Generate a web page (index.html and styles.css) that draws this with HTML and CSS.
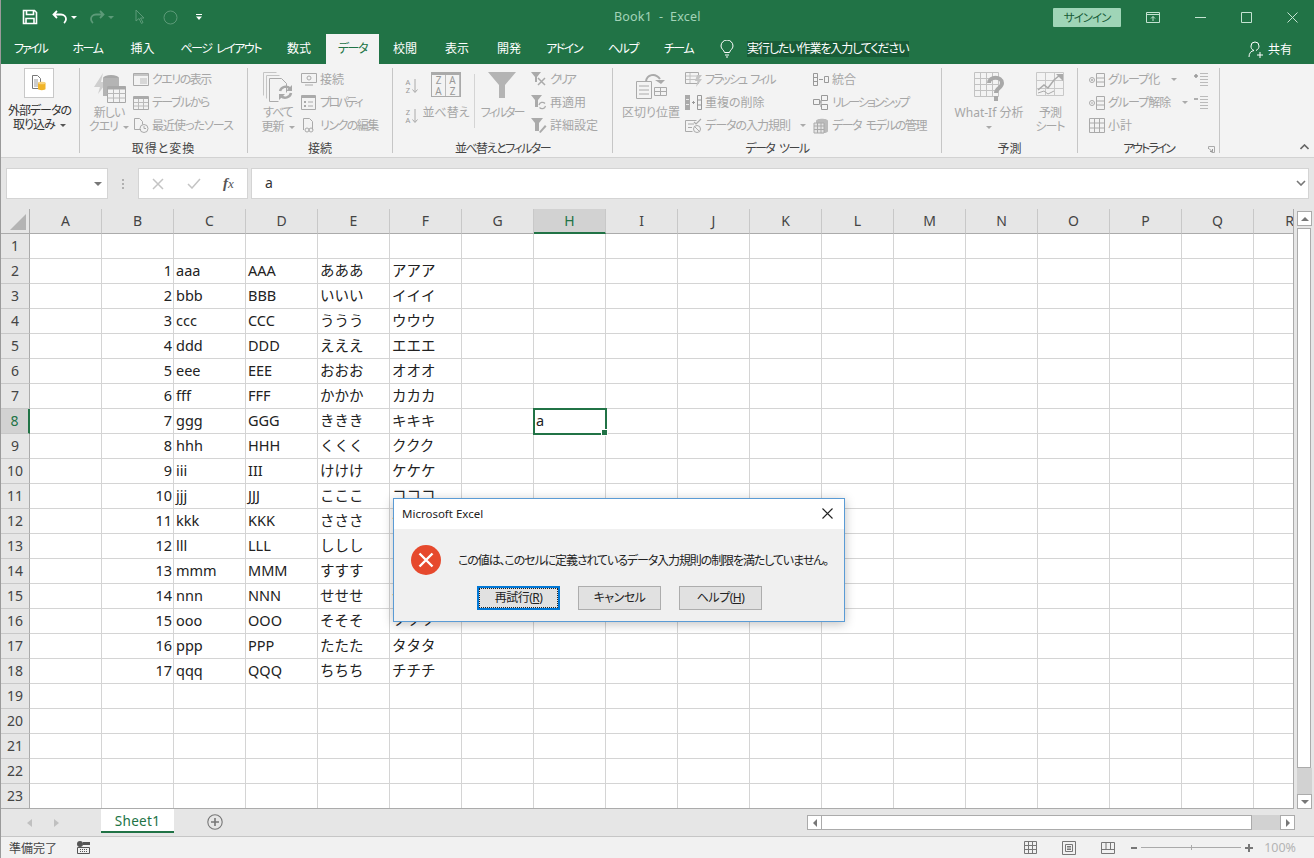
FILE: index.html
```html
<!DOCTYPE html>
<html lang="ja">
<head>
    <meta charset="UTF-8">
    <title>Book1 - Excel</title>
    <link rel="stylesheet" href="styles.css">
</head>
<body>
<div class="app">
    <!-- title bar -->
    <header class="titlebar">
        <div class="qat">
            <svg class="qat-save" width="16" height="16" viewBox="0 0 16 16"><path d="M1.5 1.5h11l2 2v11h-13z M4.5 1.5v4h7v-4 M4 14.5v-5h8v5" fill="none" stroke="#fff" stroke-width="1.6"/></svg>
            <svg class="qat-undo" width="16" height="14" viewBox="0 0 16 14"><path d="M5 1L1.5 4.500 5 8 M2 4.500h7c3 0 5 2 5 4.500s-1 3-2 4" fill="none" stroke="#fff" stroke-width="1.800"/></svg>
            <span class="qat-drop"></span>
            <svg class="qat-redo" width="16" height="14" viewBox="0 0 16 14"><path d="M11 1l3.500 3.500L11 8 M14 4.500H7C4 4.500 2 6.500 2 9s1 3 2 4" fill="none" stroke="#5c9a78" stroke-width="1.800"/></svg>
            <span class="qat-drop qat-drop-dim"></span>
            <svg class="qat-cursor" width="10" height="16" viewBox="0 0 10 16"><path d="M1 1v11l3-2.500 2.500 5 1.500-1-2.500-4.500H9z" fill="none" stroke="#5c9a78"/></svg>
            <svg class="qat-circle" width="15" height="15" viewBox="0 0 15 15"><circle cx="7.500" cy="7.500" r="6.500" fill="none" stroke="#5c9a78"/></svg>
            <svg class="qat-more" width="8" height="8" viewBox="0 0 8 8"><path d="M1 1h6v1H1z M1 3.500h6L4 7z" fill="#fff"/></svg>
        </div>
        <div class="doc-title">Book1&nbsp; -&nbsp; Excel</div>
        <div class="win-controls">
            <button class="signin">サインイン</button>
            <svg class="win-ic win-ribbon" width="14" height="11" viewBox="0 0 14 11"><path d="M.5.500h13v10H.5z M.5 2.500h13 M7 9V4.500 M5 6.500l2-2 2 2" fill="none" stroke="#c5e3d2"/></svg>
            <svg class="win-ic win-min" width="11" height="1" viewBox="0 0 11 1"><path d="M0 .500h11" stroke="#c5e3d2"/></svg>
            <svg class="win-ic win-max" width="11" height="11" viewBox="0 0 11 11"><path d="M.5.500h10v10H.5z" fill="none" stroke="#c5e3d2"/></svg>
            <svg class="win-ic win-close" width="11" height="11" viewBox="0 0 11 11"><path d="M.5.500l10 10 M10.500.500l-10 10" stroke="#c5e3d2"/></svg>
        </div>
    </header>

    <!-- ribbon tabs -->
    <nav class="tabs">
        <span class="tab tab-kana tab-file">ファイル</span>
        <span class="tab tab-kana tab-home">ホーム</span>
        <span class="tab">挿入</span>
        <span class="tab tab-kana">ページ レイアウト</span>
        <span class="tab tab-formula">数式</span>
        <span class="tab tab-kana tab-active">データ</span>
        <span class="tab tab-wide">校閲</span>
        <span class="tab tab-wide">表示</span>
        <span class="tab tab-wide">開発</span>
        <span class="tab tab-kana tab-addin">アドイン</span>
        <span class="tab tab-kana">ヘルプ</span>
        <span class="tab tab-kana">チーム</span>
        <svg class="bulb" width="14" height="18" viewBox="0 0 14 18"><path d="M4.500 12.500C4 10 1 9 1 6a6 6 0 0 1 12 0c0 3-3 4-3.500 6.500z M5 15h4 M6 17h2" fill="none" stroke="#fff"/></svg>
        <span class="tell-me">実行したい作業を入力してください</span>
        <span class="share">
            <svg width="16" height="17" viewBox="0 0 16 17"><path d="M1 16c0-4 2-6 5-6.500C3.500 8.500 3 7 3 5a4 4 0 0 1 8 0c0 2-1 3.500-3 4.500 M9 14h6 M12 11v6" fill="none" stroke="#fff"/></svg>
            共有
        </span>
    </nav>

    <!-- ribbon -->
    <div class="ribbon">
        <section class="group g-external">
            <div class="group-body">
                <div class="big big-external">
                    <div class="external-box">
                        <svg width="14" height="16" viewBox="0 0 14 16"><path d="M.5.500h5l3 3v10H.5z" fill="#fff" stroke="#777"/><path d="M2 5h4M2 7h4M2 9h4M2 11h4" stroke="#999"/><path d="M6 8c0-1.500 7.500-1.500 7.500 0v6c0 1.500-7.500 1.500-7.500 0z" fill="#f0b429"/><ellipse cx="9.750" cy="8" rx="3.750" ry="1.300" fill="#f8d27a"/></svg>
                    </div>
                    <span class="big-label big-label-on ls-1">外部データの<br>取り込み <i class="caret"></i></span>
                </div>
            </div>
        </section>

        <section class="group g-transform">
            <div class="group-body">
                <div class="big big-query">
                    <div class="big-icon">
                        <svg width="33" height="32" viewBox="0 0 33 32"><path d="M10 1L1 15h6l-2 7 9-12H8z" fill="#cfcfcf"/><ellipse cx="18" cy="6" rx="8" ry="3" fill="#a8a8a8"/><path d="M10 6v18h16V6z" fill="#b4b4b4"/><path d="M14.500 14.500h18v16h-18z" fill="#f3f3f3" stroke="#a8a8a8"/><path d="M14.500 14.500h18v3h-18z" fill="#a8a8a8"/><path d="M14.500 21.500h18M14.500 26h18M20.500 17v13M26.500 17v13" stroke="#b8b8b8" fill="none"/></svg>
                    </div>
                    <span class="big-label ls-1">新しい<br>クエリ <i class="caret caret-dim"></i></span>
                </div>
                <div class="list">
                    <div class="item"><svg width="16" height="13" viewBox="0 0 16 13"><path d="M.5.500h15v12H.5z" fill="none" stroke="#aaa"/><path d="M1 1h14v2H1z" fill="#c4c4c4"/><path d="M7 6h7M7 8h7M7 10h7" stroke="#bbb"/></svg><span class="ls-15">クエリの表示</span></div>
                    <div class="item"><svg width="16" height="14" viewBox="0 0 16 14"><path d="M.5.500h15v13H.5z" fill="none" stroke="#aaa"/><path d="M1 1h14v2H1z" fill="#aaa"/><path d="M1 6.500h14M1 10h14M5.500 3v10M10.500 3v10" stroke="#bbb"/></svg><span class="ls-15">テーブルから</span></div>
                    <div class="item"><svg width="16" height="15" viewBox="0 0 16 15"><path d="M8 11.500H1.500V.500h5l3 3v3" fill="none" stroke="#aaa"/><circle cx="11" cy="10.500" r="4" fill="none" stroke="#aaa"/><path d="M11 8v2.500h2" fill="none" stroke="#aaa"/></svg><span class="ls-1">最近使ったソース</span></div>
                </div>
            </div>
            <div class="group-label ls-plus">取得と変換</div>
        </section>

        <section class="group g-connect">
            <div class="group-body">
                <div class="big big-refresh">
                    <div class="big-icon">
                        <svg width="30" height="30" viewBox="0 0 30 30"><path d="M.5.500h13M.5.500v23M3.500 3.500h13M3.500 3.500v23" fill="none" stroke="#c4c4c4"/><path d="M6.500 6.500h12l5 5v9M6.500 6.500v23h9" fill="none" stroke="#aaa"/><path d="M17 19a6 6 0 0 1 10-2.500 M28 21a6 6 0 0 1-10 3" fill="none" stroke="#a8a8a8" stroke-width="2.500"/><path d="M29 13v6h-6zM16 28v-6h6z" fill="#a8a8a8"/></svg>
                    </div>
                    <span class="big-label ls-1">すべて<br>更新 <i class="caret caret-dim"></i></span>
                </div>
                <div class="list">
                    <div class="item"><svg width="16" height="13" viewBox="0 0 16 13"><path d="M.5.500h15v9H.5z" fill="none" stroke="#aaa"/><circle cx="8" cy="5" r="2" fill="none" stroke="#aaa"/><path d="M4 12h8" stroke="#aaa"/></svg>接続</div>
                    <div class="item"><svg width="16" height="15" viewBox="0 0 16 15"><path d="M.5.500h14v14H.5z" fill="none" stroke="#aaa"/><path d="M1 1h13v2H1z" fill="#aaa"/><path d="M3 6h2v2H3zM3 10h2v2H3z" fill="#aaa"/><path d="M7 7h5M7 11h5" stroke="#aaa"/></svg><span class="ls-25">プロパティ</span></div>
                    <div class="item"><svg width="16" height="15" viewBox="0 0 16 15"><path d="M2.500 12V.500h6l3 3v8" fill="none" stroke="#aaa"/><circle cx="6" cy="12" r="2" fill="none" stroke="#aaa"/><circle cx="10" cy="12" r="2" fill="none" stroke="#aaa"/></svg><span class="ls-15">リンクの編集</span></div>
                </div>
            </div>
            <div class="group-label">接続</div>
        </section>

        <section class="group g-sort">
            <div class="group-body">
                <div class="sort-col">
                    <svg width="15" height="16" viewBox="0 0 15 16"><path d="M11 1v13M8.500 11.500L11 14.500l2.500-3" fill="none" stroke="#aaa"/></svg>
                    <svg width="15" height="16" viewBox="0 0 15 16"><path d="M11 1v13M8.500 11.500L11 14.500l2.500-3" fill="none" stroke="#aaa"/></svg>
                    <span class="az az-1">A<br>Z</span>
                    <span class="az az-2">Z<br>A</span>
                </div>
                <div class="big big-sort">
                    <div class="big-icon">
                        <div class="sort-grid"><span>Z</span><span>A</span><span>A</span><span>Z</span></div>
                    </div>
                    <span class="big-label">並べ替え</span>
                </div>
                <div class="vsep"></div>
                <div class="big big-filter">
                    <div class="big-icon">
                        <svg width="28" height="26" viewBox="0 0 28 26"><path d="M0 0h28L17 13v13h-6V13z" fill="#b4b4b4"/></svg>
                    </div>
                    <span class="big-label ls-2">フィルター</span>
                </div>
                <div class="list">
                    <div class="item"><svg width="16" height="15" viewBox="0 0 16 15"><path d="M0 0h10L6 5v5H4V5z" fill="#aaa"/><path d="M7 6l7 7M14 6l-7 7" stroke="#aaa" stroke-width="1.500"/></svg><span class="ls-25">クリア</span></div>
                    <div class="item"><svg width="16" height="15" viewBox="0 0 16 15"><path d="M0 0h11L7 5v7H4V5z" fill="#aaa"/><path d="M8 10a3.500 3.500 0 0 1 6-1.500 M14.500 11a3.500 3.500 0 0 1-6 1.500" fill="none" stroke="#aaa" stroke-width="1.200"/></svg>再適用</div>
                    <div class="item"><svg width="16" height="15" viewBox="0 0 16 15"><path d="M0 0h12L8 5v8H4V5z" fill="#aaa"/><path d="M8 14l6-7 1.500 1.500-6 6.500z" fill="#aaa"/></svg>詳細設定</div>
                </div>
            </div>
            <div class="group-label ls-15">並べ替えとフィルター</div>
        </section>

        <section class="group g-tools">
            <div class="group-body">
                <div class="big big-split">
                    <div class="big-icon">
                        <svg width="31" height="27" viewBox="0 0 31 27"><path d="M.5 9.500h15v17H.5z" fill="none" stroke="#aaa"/><path d="M3 14h10M3 18h10M3 22h10" stroke="#aaa"/><path d="M18.500 15.500h12v8h-12zM18.500 19.500h12M24.500 15.500v8" fill="none" stroke="#aaa"/><path d="M10 9C11 3 19 0 24 7" fill="none" stroke="#aaa" stroke-width="2"/><path d="M19 8h10l-4 4z" fill="#aaa"/></svg>
                    </div>
                    <span class="big-label">区切り位置</span>
                </div>
                <div class="list list-tools">
                    <div class="item"><svg width="17" height="15" viewBox="0 0 17 15"><path d="M.5.500h13v11H.5z" fill="none" stroke="#aaa"/><path d="M1 4h12M1 7.500h12M5 1v10" stroke="#c0c0c0"/><path d="M12 3h5l-3 4h3l-6 8 1.500-6H10z" fill="#c4c4c4"/></svg><span class="ls-2">フラッシュ フィル</span></div>
                    <div class="item"><svg width="17" height="15" viewBox="0 0 17 15"><path d="M0 0h5v15H0z" fill="#aaa"/><path d="M1 4.500h3M1 9.500h3" stroke="#e8e8e8"/><path d="M12.500.500h4v14h-4zM12.500 5h4M12.500 10h4" fill="none" stroke="#999"/><path d="M7 7.500h3M8.500 6v3" stroke="#999"/></svg>重複の削除</div>
                    <div class="item"><svg width="17" height="15" viewBox="0 0 17 15"><path d="M.5 2.500h11M.5 2.500v11h7M3 6h6M3 9.500h4" fill="none" stroke="#aaa"/><path d="M9 4l2 2 5-5" fill="none" stroke="#aaa" stroke-width="1.200"/><circle cx="12" cy="11" r="3.500" fill="none" stroke="#aaa"/><path d="M9.500 8.500l5 5" stroke="#aaa"/></svg><span class="ls-1">データの入力規則</span><i class="caret caret-dim caret-gap"></i></div>
                </div>
                <div class="list">
                    <div class="item"><svg width="16" height="13" viewBox="0 0 16 13"><path d="M.5.500h4v12h-4zM.5 4.500h4M.5 8.500h4M11.500 3.500h4v6h-4z" fill="none" stroke="#999"/><path d="M6 6.500h4" stroke="#999"/></svg>統合</div>
                    <div class="item"><svg width="16" height="15" viewBox="0 0 16 15"><path d="M.5 4.500h6v5h-6zM8.500.500h6v5h-6zM8.500 9.500h6v5h-6zM6.500 7h2M8 5v7" fill="none" stroke="#999"/></svg><span class="ls-2">リレーションシップ</span></div>
                    <div class="item"><svg width="16" height="16" viewBox="0 0 16 16"><path d="M3 3c0-3 12-3 12 0v10c0 3-12 3-12 0z" fill="#bbb"/><path d="M1 5h10v10H1z" fill="#e4e4e4" stroke="#aaa"/><path d="M1 8h10M1 11.500h10M4.500 5v10M8 5v10" stroke="#aaa"/></svg><span class="ls-15">データ モデルの管理</span></div>
                </div>
            </div>
            <div class="group-label ls-15">データ ツール</div>
        </section>

        <section class="group g-forecast">
            <div class="group-body">
                <div class="big big-whatif">
                    <div class="big-icon">
                        <svg width="30" height="30" viewBox="0 0 30 30"><path d="M.5.500h24v24H.5zM.5 6.500h24M.5 12.500h24M.5 18.500h24M6.500.500v24M12.500.500v24M18.500.500v24" fill="none" stroke="#c2c2c2"/><path d="M15 11c0-7 13-7 13 0 0 5-6 5-6 10" fill="none" stroke="#a8a8a8" stroke-width="4"/><path d="M20 24h4v5h-4z" fill="#a8a8a8"/></svg>
                    </div>
                    <span class="big-label">What-If 分析<br><i class="caret caret-dim"></i></span>
                </div>
                <div class="big big-sheet">
                    <div class="big-icon">
                        <svg width="28" height="26" viewBox="0 0 28 26"><path d="M.5.500h27v23H.5zM.5 8.500h27M.5 16.500h27M9.500.500v23M18.500.500v23" fill="none" stroke="#c8c8c8"/><path d="M2 18l6-5 4 3 6-8 6-5" fill="none" stroke="#aaa" stroke-width="1.500"/><path d="M20 2h7v7z" fill="#aaa"/><path d="M2 21l6-2 4 3 6-3" fill="none" stroke="#aaa"/></svg>
                    </div>
                    <span class="big-label ls-1">予測<br>シート</span>
                </div>
            </div>
            <div class="group-label">予測</div>
        </section>

        <section class="group g-outline">
            <div class="group-body">
                <div class="list list-outline">
                    <div class="item"><svg width="16" height="14" viewBox="0 0 16 14"><path d="M7.500.500h8v13h-8zM7.500 5h8M7.500 9h8" fill="none" stroke="#aaa"/><circle cx="3" cy="7" r="2.500" fill="none" stroke="#aaa"/><path d="M2 7h2M3 6v2" stroke="#aaa"/></svg><span class="ls-1">グループ化</span><i class="caret caret-dim caret-gap2"></i></div>
                    <div class="item"><svg width="16" height="14" viewBox="0 0 16 14"><path d="M7.500.500h8v13h-8zM7.500 5h8M7.500 9h8" fill="none" stroke="#aaa"/><circle cx="3" cy="7" r="2.500" fill="none" stroke="#aaa"/><path d="M2 7h2" stroke="#aaa"/></svg><span class="ls-1">グループ解除</span><i class="caret caret-dim caret-gap2"></i></div>
                    <div class="item"><svg width="16" height="15" viewBox="0 0 16 15"><path d="M.5.500h15v14H.5zM5.500.500v14M10.500.500v14M.5 5h15M.5 10h15" fill="none" stroke="#aaa"/></svg>小計</div>
                </div>
                <div class="outline-side">
                    <svg width="14" height="14" viewBox="0 0 14 14"><path d="M0 3h4M2 1v4" stroke="#999" stroke-width="1.500"/><path d="M6 .500h8M6 3.500h8M6 6.500h8M6 9.500h8M6 12.500h8" stroke="#bbb"/></svg>
                    <svg width="14" height="14" viewBox="0 0 14 14"><path d="M0 3h4" stroke="#999" stroke-width="1.500"/><path d="M6 .500h8M6 3.500h8M6 6.500h8M6 9.500h8M6 12.500h8" stroke="#bbb"/></svg>
                </div>
            </div>
            <div class="group-label ls-2">アウトライン</div>
            <svg class="launcher" width="7" height="7" viewBox="0 0 7 7"><path d="M.5 3V.500H6.500V6.500H3.500" fill="none" stroke="#aaa"/><path d="M1 2.500l3 3M4.500 3v2.500H2" fill="none" stroke="#999"/></svg>
        </section>

        <svg class="collapse" width="9" height="6" viewBox="0 0 9 6"><path d="M.5 5L4.500 1l4 4" fill="none" stroke="#666" stroke-width="1.600"/></svg>
    </div>

    <!-- formula bar -->
    <div class="formula">
        <div class="namebox"><i class="caret caret-name"></i></div>
        <div class="grip"><i></i><i></i><i></i></div>
        <div class="fx-box">
            <svg width="12" height="12" viewBox="0 0 12 12"><path d="M1 1l10 10M11 1L1 11" stroke="#c4c4c4" stroke-width="1.500"/></svg>
            <svg width="14" height="11" viewBox="0 0 14 11"><path d="M1 6l4 4 8-9" fill="none" stroke="#c4c4c4" stroke-width="1.500"/></svg>
            <span class="fx"><b>f</b>x</span>
        </div>
        <div class="formula-input">a
            <svg width="10" height="6" viewBox="0 0 10 6"><path d="M1 1l4 4 4-4" fill="none" stroke="#777" stroke-width="1.600"/></svg>
        </div>
    </div>

    <!-- sheet + vertical scrollbar -->
    <div class="workspace">
        <div class="sheet" id="sheet"></div>
        <div class="vscroll">
            <div class="sb-btn"><i class="arrow-up"></i></div>
            <div class="vthumb"></div>
            <div class="vtrack"></div>
            <div class="sb-btn"><i class="arrow-down"></i></div>
        </div>
    </div>

    <!-- sheet tabs -->
    <div class="sheetbar">
        <div class="sheet-nav"><i class="nav-left"></i><i class="nav-right"></i></div>
        <div class="sheet-tab">Sheet1</div>
        <svg class="add-sheet" width="16" height="16" viewBox="0 0 16 16"><circle cx="8" cy="8" r="7.200" fill="none" stroke="#777" stroke-width="1.100"/><path d="M8 4v8M4 8h8" stroke="#777" stroke-width="1.600"/></svg>
        <div class="hscroll">
            <div class="sb-btn"><i class="arrow-left"></i></div>
            <div class="hthumb"></div>
            <div class="htrack"></div>
            <div class="sb-btn"><i class="arrow-right"></i></div>
        </div>
    </div>

    <!-- status bar -->
    <footer class="statusbar">
        <span class="status-text">準備完了</span>
        <svg class="macro" width="13" height="13" viewBox="0 0 13 13"><circle cx="3" cy="3" r="3" fill="#555"/><path d="M.5 6.500h12v6H.5z" fill="none" stroke="#555"/><path d="M6 1h7v3H6z" fill="#555"/><path d="M3 8.500h8M3 10.500h8" stroke="#555" stroke-dasharray="1 1"/></svg>
        <div class="views">
            <svg width="13" height="13" viewBox="0 0 13 13"><path d="M.5.500h12v12H.5zM.5 4.500h12M.5 8.500h12M4.500.500v12M8.500.500v12" fill="none" stroke="#777"/></svg>
            <svg width="14" height="14" viewBox="0 0 14 14"><path d="M.5.500h13v13H.5z" fill="none" stroke="#777"/><path d="M3.500 3.500h7v7h-7zM5 5.500h4M5 7h4M5 8.500h4" fill="none" stroke="#777"/></svg>
            <svg width="14" height="12" viewBox="0 0 14 12"><path d="M.5.500h13v11H.5zM.5 7.500h13M5 .500v7M9.500.500v7" fill="none" stroke="#777"/></svg>
        </div>
        <div class="zoom">
            <span class="zoom-minus"></span>
            <span class="zoom-track"><i></i></span>
            <span class="zoom-plus"></span>
            <span class="zoom-value">100%</span>
        </div>
    </footer>

    <!-- validation dialog -->
    <div class="dialog">
        <div class="dialog-title">
            Microsoft Excel
            <svg width="11" height="11" viewBox="0 0 11 11"><path d="M.5.500l10 10M10.500.500l-10 10" stroke="#222" stroke-width="1.100"/></svg>
        </div>
        <div class="dialog-body">
            <div class="dialog-msg">
                <svg width="30" height="30" viewBox="0 0 30 30"><circle cx="15" cy="15" r="15" fill="#e6492d"/><path d="M8.500 8.500l13 13M21.500 8.500l-13 13" stroke="#fff" stroke-width="2.400"/></svg>
                <p>この値は、このセルに定義されているデータ入力規則の制限を満たしていません。</p>
            </div>
            <div class="dialog-btns">
                <button class="btn btn-default"><span>再試行(<u>R</u>)</span></button>
                <button class="btn"><span>キャンセル</span></button>
                <button class="btn"><span>ヘルプ(<u>H</u>)</span></button>
            </div>
        </div>
    </div>
</div>
<script src="grid.js"></script>
</body>
</html>
```

FILE: styles.css
```css
* {
    box-sizing: border-box;
}
html, body {
    margin: 0;
    height: 100%;
    overflow: hidden;
}
body {
    font-family: "Noto Sans", "Noto Sans CJK JP", sans-serif;
    font-size: 12px;
    font-feature-settings: "palt";
    color: #333;
}
.app {
    position: relative;
    width: 1314px;
    height: 858px;
    border-left: 1px solid #9a9a9a;
    background: #e6e6e6;
    display: flex;
    flex-direction: column;
}

/* narrow kana text */
.ls-plus { letter-spacing: 1px; }
.ls-1 { letter-spacing: -1px; word-spacing: 3px; }
.ls-15 { letter-spacing: -1.500px; word-spacing: 3px; }
.ls-2 { letter-spacing: -2px; word-spacing: 3px; }
.ls-25 { letter-spacing: -2.500px; }

/* title bar */
.titlebar {
    height: 34px;
    background: #217346;
    display: flex;
    align-items: center;
    position: relative;
}
.qat {
    display: flex;
    align-items: center;
    padding-left: 21px;
}
.qat-undo { margin-left: 14px; }
.qat-drop {
    width: 0;
    height: 0;
    margin-left: 3px;
    border: 3px solid transparent;
    border-top-color: #fff;
    border-bottom: 0;
}
.qat-drop-dim { border-top-color: #5c9a78; }
.qat-redo { margin-left: 12px; }
.qat-cursor { margin-left: 21px; }
.qat-circle { margin-left: 18px; }
.qat-more { margin-left: 17px; }
.doc-title {
    position: absolute;
    left: 613px;
    top: 8px;
    font-size: 12.500px;
    color: #a3d3b8;
    letter-spacing: .2px;
}
.win-controls {
    margin-left: auto;
    display: flex;
    align-items: center;
    padding-right: 16px;
}
.signin {
    width: 68px;
    height: 19px;
    padding: 0;
    border: 0;
    border-radius: 1px;
    background: #9fd5b7;
    color: #185c37;
    font: inherit;
    font-size: 11.500px;
    line-height: 19px;
    letter-spacing: -1px;
}
.win-ribbon { margin-left: 25px; }
.win-min { margin-left: 35px; }
.win-max { margin-left: 35px; }
.win-close { margin-left: 35px; }

/* tabs */
.tabs {
    height: 30px;
    background: #217346;
    display: flex;
    align-items: center;
    color: #fff;
}
.tab {
    height: 30px;
    line-height: 30px;
    padding: 0 13px;
    white-space: nowrap;
}
.tab-kana {
    letter-spacing: -1.500px;
    word-spacing: 3px;
}
.tab-file { letter-spacing: -2.250px; }
.tab-home { padding-right: 15px; }
.tab-formula { padding-right: 15px; }
.tab-wide { padding: 0 14px; }
.tab-addin { padding-left: 11px; }
.tab-active {
    padding: 0 12px;
    background: #f3f3f3;
    color: #217346;
}
.bulb { margin-left: 14px; }
.tell-me {
    margin-left: 13px;
    width: 162px;
    height: 16px;
    line-height: 16px;
    background: #185c37;
    white-space: nowrap;
    letter-spacing: -1.100px;
}
.share {
    margin-left: auto;
    padding-right: 22px;
    display: flex;
    align-items: center;
    gap: 4px;
}

/* ribbon */
.ribbon {
    height: 94px;
    background: #f3f3f3;
    border-bottom: 1px solid #d2d2d2;
    padding-top: 4px;
    padding-bottom: 4px;
    display: flex;
    color: #a6a6a6;
    line-height: 14px;
}
.group {
    position: relative;
    height: 85px;
    border-right: 1px solid #c6c6c6;
    display: flex;
    flex-direction: column;
    flex: none;
}
.group-body {
    display: flex;
    height: 74px;
    flex: none;
}
.group-label {
    height: 14px;
    line-height: 14px;
    flex: none;
    text-align: center;
    color: #444;
    white-space: nowrap;
}
.g-external { width: 79px; }
.g-transform { width: 168px; }
.g-connect { width: 145px; }
.g-sort { width: 220px; }
.g-tools { width: 329px; }
.g-forecast { width: 136px; }
.g-outline { width: 142px; }
.g-transform .group-body { padding-left: 9px; }
.g-connect .group-body { padding-left: 10px; }
.g-sort .group-body { padding-left: 11px; }
.g-tools .group-body { padding-left: 10px; }
.g-forecast .group-body { padding-left: 10px; }
.g-outline .group-body { padding-left: 11px; }
.big {
    display: flex;
    flex-direction: column;
    align-items: center;
    flex: none;
    text-align: center;
}
.big-icon {
    height: 38px;
    padding-top: 4px;
}
.big-label {
    white-space: nowrap;
}
.big-label-on {
    color: #333;
}
.big-external {
    width: 77px;
}
.external-box {
    width: 30px;
    height: 30px;
    margin-bottom: 6px;
    margin-right: 2px;
    background: #fff;
    border: 1px solid #c8c8c8;
    display: flex;
    align-items: center;
    justify-content: center;
}
.big-query { width: 40px; margin-right: 4px; }
.big-refresh { width: 40px; margin-right: 3px; }
.sort-col {
    position: relative;
    width: 16px;
    margin-right: 4px;
    padding-top: 10px;
    display: flex;
    flex-direction: column;
    gap: 14px;
}
.az {
    position: absolute;
    left: 0;
    width: 8px;
    font-size: 7.500px;
    line-height: 8px;
    text-align: center;
    color: #999;
}
.az-1 { top: 10px; }
.az-2 { top: 40px; }
.big-sort { width: 44px; }
.sort-grid {
    width: 30px;
    height: 25px;
    border: 1px solid #aaa;
    border-top: 3px solid #aaa;
    display: grid;
    grid-template-columns: 1fr 1fr;
    font-size: 10px;
    line-height: 10px;
    text-align: center;
    color: #999;
}
.sort-grid span {
    border-right: 1px solid #bbb;
}
.vsep {
    width: 1px;
    height: 54px;
    margin: 6px 6px 0 6px;
    background: #d4d4d4;
}
.big-filter { width: 42px; margin-right: 8px; }
.big-split { width: 56px; margin-right: 6px; }
.big-whatif { width: 74px; margin-right: 4px; }
.big-sheet { width: 40px; }
.list {
    display: flex;
    flex-direction: column;
    flex: none;
}
.list-tools { width: 128px; }
.list-outline { width: 105px; }
.item {
    height: 23px;
    display: flex;
    align-items: center;
    gap: 3px;
    white-space: nowrap;
}
.outline-side {
    padding-top: 5px;
    display: flex;
    flex-direction: column;
    gap: 9px;
}
.launcher {
    position: absolute;
    right: 4px;
    bottom: 0;
}
.collapse {
    margin: 76px 0 0 80px;
}
.caret {
    display: inline-block;
    width: 0;
    height: 0;
    border: 3px solid transparent;
    border-top-color: #555;
    border-bottom: 0;
    vertical-align: middle;
}
.caret-dim { border-top-color: #aaa; }
.caret-gap { margin-left: 7px; }
.caret-gap2 { margin-left: 9px; }

/* formula bar */
.formula {
    height: 51px;
    padding: 10px 5px;
    display: flex;
    align-items: stretch;
}
.namebox {
    width: 102px;
    background: #fff;
    border: 1px solid #d4d4d4;
    display: flex;
    align-items: center;
    justify-content: flex-end;
    padding-right: 5px;
}
.caret-name {
    border-width: 4px;
    border-bottom: 0;
    border-top-color: #777;
}
.grip {
    width: 30px;
    display: flex;
    flex-direction: column;
    align-items: center;
    justify-content: center;
    gap: 2px;
}
.grip i {
    width: 2px;
    height: 2px;
    background: #b0b0b0;
}
.fx-box {
    width: 110px;
    background: #fff;
    border: 1px solid #d4d4d4;
    display: flex;
    align-items: center;
    padding-left: 13px;
    gap: 23px;
}
.fx {
    font-family: "Liberation Serif", serif;
    font-style: italic;
    font-size: 13px;
    color: #555;
    margin-left: -1px;
}
.fx b { font-size: 15px; }
.formula-input {
    flex: 1;
    margin-left: 3px;
    background: #fff;
    border: 1px solid #d4d4d4;
    padding-left: 13px;
    padding-right: 2px;
    padding-bottom: 2px;
    font-size: 14px;
    line-height: 26px;
    display: flex;
    align-items: center;
    justify-content: space-between;
}

/* sheet */
.workspace {
    display: flex;
    height: 600px;
}
.sheet {
    width: 1293px;
    height: 600px;
    overflow: hidden;
    flex: none;
    display: grid;
    grid-template-columns: 29px repeat(18, 72px);
    grid-auto-rows: 25px;
    background: #fff;
    border-right: 1px solid #ababab;
    border-bottom: 1px solid #ababab;
    font-size: 14.500px;
    line-height: 22px;
    color: #222;
    font-feature-settings: normal;
}
.cell {
    border-right: 1px solid #d4d4d4;
    border-bottom: 1px solid #d4d4d4;
    padding: 0 2px;
    white-space: nowrap;
    position: relative;
}
.cell-num { text-align: right; padding-right: 1px; }
.corner, .col-head, .row-head {
    background: #e6e6e6;
    text-align: center;
    color: #444;
    font-size: 14px;
    line-height: 24px;
}
.corner {
    position: relative;
    border-right: 1px solid #ababab;
    border-bottom: 1px solid #ababab;
}
.corner::after {
    content: "";
    position: absolute;
    right: 3px;
    bottom: 3px;
    width: 0;
    height: 0;
    border-left: 16px solid transparent;
    border-bottom: 16px solid #b4b4b4;
}
.col-head {
    border-right: 1px solid #c8c8c8;
    border-bottom: 1px solid #ababab;
}
.row-head {
    border-right: 1px solid #ababab;
    border-bottom: 1px solid #c8c8c8;
}
.head-on {
    background: #d2d2d2;
    color: #217346;
}
.col-head.head-on { border-bottom: 2px solid #217346; line-height: 23px; }
.row-head.head-on { border-right: 2px solid #217346; }
.cell-active::after {
    content: "";
    position: absolute;
    left: -1px;
    top: -1px;
    right: -2px;
    bottom: -2px;
    border: 2px solid #217346;
    z-index: 1;
}
.cell-active::before {
    content: "";
    position: absolute;
    right: -3px;
    bottom: -3px;
    width: 5px;
    height: 5px;
    background: #217346;
    border: 1px solid #fff;
    z-index: 2;
}

/* scrollbars */
.vscroll {
    width: 20px;
    padding: 2px 3px 0 3px;
    display: flex;
    flex-direction: column;
}
.sb-btn {
    width: 15px;
    height: 15px;
    flex: none;
    background: #fff;
    border: 1px solid #ababab;
    display: flex;
    align-items: center;
    justify-content: center;
}
.vthumb {
    height: 540px;
    margin-top: 2px;
    background: #fff;
    border: 1px solid #ababab;
    flex: none;
}
.vtrack {
    width: 15px;
    height: 26px;
    flex: none;
    background: #d2d2d2;
}
.arrow-up, .arrow-down, .arrow-left, .arrow-right {
    width: 0;
    height: 0;
    border: 4px solid transparent;
}
.arrow-up { border-bottom-color: #777; border-top: 0; }
.arrow-down { border-top-color: #777; border-bottom: 0; }
.arrow-left { border-right-color: #777; border-left: 0; }
.arrow-right { border-left-color: #777; border-right: 0; }

/* sheet tabs */
.sheetbar {
    height: 28px;
    border-bottom: 1px solid #c6c6c6;
    display: flex;
    align-items: flex-start;
}
.sheet-nav {
    width: 100px;
    height: 27px;
    display: flex;
    align-items: center;
    padding-left: 26px;
    gap: 22px;
}
.nav-left, .nav-right {
    width: 0;
    height: 0;
    border: 4px solid transparent;
}
.nav-left { border-right: 5px solid #c0c0c0; border-left: 0; }
.nav-right { border-left: 5px solid #c0c0c0; border-right: 0; }
.sheet-tab {
    width: 73px;
    height: 24px;
    background: #fff;
    border-bottom: 2px solid #217346;
    color: #217346;
    text-align: center;
    font-size: 13.500px;
    line-height: 24px;
    letter-spacing: .3px;
}
.add-sheet { margin: 5px 0 0 33px; }
.hscroll {
    margin-left: auto;
    margin-right: 19px;
    margin-top: 6px;
    display: flex;
    height: 15px;
}
.hthumb {
    width: 431px;
    margin-left: -1px;
    background: #fff;
    border: 1px solid #ababab;
}
.htrack {
    width: 28px;
    background: #d2d2d2;
}

/* status bar */
.statusbar {
    flex: 1;
    background: #f1f1f1;
    display: flex;
    align-items: center;
}
.status-text {
    margin-left: 8px;
    color: #444;
}
.macro { margin-left: 20px; }
.views {
    margin-left: auto;
    display: flex;
    align-items: center;
    gap: 25px;
}
.zoom {
    display: flex;
    align-items: center;
    margin-left: 16px;
    margin-right: 18px;
}
.zoom-minus {
    width: 6px;
    height: 2px;
    background: #777;
}
.zoom-track {
    position: relative;
    width: 100px;
    height: 1px;
    margin: 0 4px;
    background: #aaa;
}
.zoom-track i {
    position: absolute;
    left: 50px;
    top: -2px;
    width: 1px;
    height: 5px;
    background: #aaa;
}
.zoom-plus {
    position: relative;
    width: 8px;
    height: 2px;
    background: #777;
}
.zoom-plus::after {
    content: "";
    position: absolute;
    left: 3px;
    top: -3px;
    width: 2px;
    height: 8px;
    background: #777;
}
.zoom-value {
    margin-left: 11px;
    font-size: 12.500px;
    color: #b4b4b4;
}

/* dialog */
.dialog {
    position: absolute;
    left: 392px;
    top: 498px;
    width: 452px;
    height: 124px;
    background: #fff;
    border: 1px solid #5a9bd5;
    box-shadow: 0 2px 10px rgba(0, 0, 0, .25);
    display: flex;
    flex-direction: column;
    z-index: 5;
}
.dialog-title {
    height: 30px;
    padding: 0 11px 2px 8px;
    display: flex;
    align-items: center;
    justify-content: space-between;
    color: #222;
    font-size: 11.500px;
}
.dialog-body {
    flex: 1;
    background: #f0f0f0;
    padding-left: 17px;
}
.dialog-msg {
    display: flex;
    align-items: center;
    height: 31px;
    margin-top: 15px;
}
.dialog-msg svg { flex: none; }
.dialog-msg p {
    margin: 0 0 0 17px;
    white-space: nowrap;
    color: #222;
    font-size: 12px;
    letter-spacing: -1.100px;
}
.dialog-btns {
    display: flex;
    margin: 11px 0 0 66px;
    gap: 18px;
}
.btn {
    width: 83px;
    height: 24px;
    padding: 0;
    background: #e1e1e1;
    border: 1px solid #adadad;
    font: inherit;
    font-size: 12px;
    color: #222;
    line-height: 20px;
    letter-spacing: -.5px;
}
.btn-default {
    border: 2px solid #0078d7;
}
.btn-default span {
    display: block;
    border: 1px dotted #222;
    line-height: 18px;
    height: 20px;
}
```

FILE: grid.js
```js
// 列見出しと行を組み立てる
var cols = 'ABCDEFGHIJKLMNOPQR'.split('');
var hira = 'あいうえおかきくけこさしすせそたち';
var kata = 'アイウエオカキクケコサシスセソタチ';
var abc = 'abcdefghijklmnopq';
var sheet = document.getElementById('sheet');

function add(cls, text) {
    var el = document.createElement('div');
    el.className = cls;
    if (text !== undefined) el.textContent = text;
    sheet.appendChild(el);
    return el;
}

function rep(ch) {
    return ch + ch + ch;
}

add('corner');
cols.forEach(function (c) {
    add('col-head' + (c === 'H' ? ' head-on' : ''), c);
});

for (var r = 1; r <= 23; r++) {
    add('row-head' + (r === 8 ? ' head-on' : ''), r);
    for (var c = 0; c < cols.length; c++) {
        var i = r - 2;
        var hasData = r >= 2 && r <= 18;
        if (hasData && c === 1) add('cell cell-num', r - 1);
        else if (hasData && c === 2) add('cell', rep(abc[i]));
        else if (hasData && c === 3) add('cell', rep(abc[i].toUpperCase()));
        else if (hasData && c === 4) add('cell', rep(hira[i]));
        else if (hasData && c === 5) add('cell', rep(kata[i]));
        else if (r === 8 && c === 7) add('cell cell-active', 'a');
        else add('cell');
    }
}
```
